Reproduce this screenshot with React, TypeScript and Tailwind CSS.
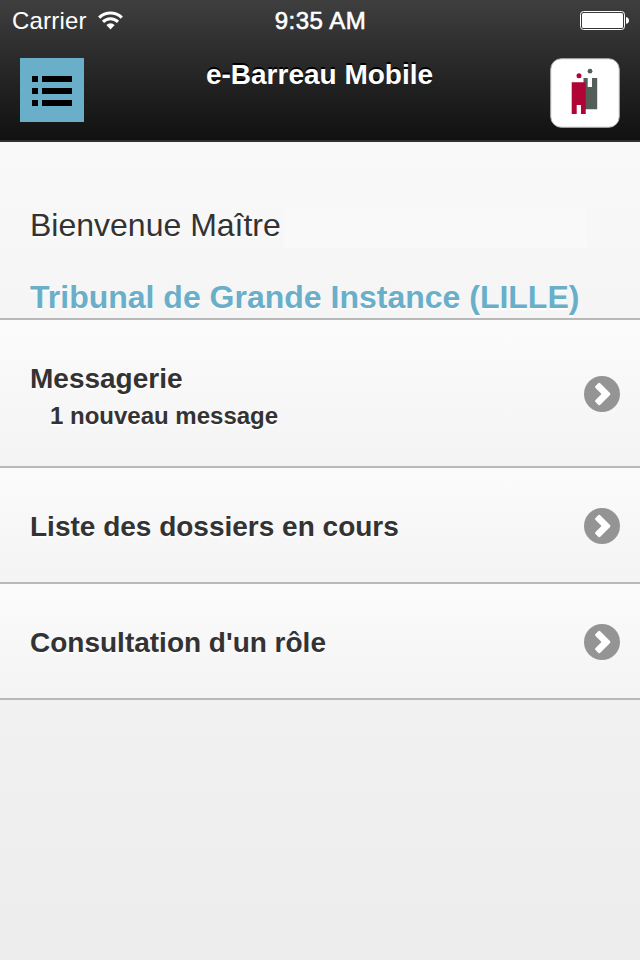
function WifiIcon() {
  return (
    <svg width="26" height="20" viewBox="0 0 26 20" fill="none" stroke="#fff" className="mt-px ml-[10px]">
      <path d="M2.200 6.600A16.200 16.200 0 0 1 24.800 6.600" strokeWidth="3.200" />
      <path d="M6 10.900A10.500 10.500 0 0 1 21 10.900" strokeWidth="3" />
      <path d="M9.300 14.100Q13.500 10.600 17.700 14.100L13.500 18.500z" fill="#fff" stroke="none" />
    </svg>
  );
}

function BatteryIcon() {
  return (
    <svg width="50" height="20" viewBox="0 0 50 20">
      <rect x="1.5" y="1.5" width="44" height="18" rx="3" fill="none" stroke="#fff" strokeWidth="1" />
      <rect x="3" y="3" width="41" height="15" rx="1.500" fill="#fff" />
      <path d="M47 7q3 .6 3 3.400t-3 3.400z" fill="#fff" />
    </svg>
  );
}

function MenuIcon() {
  return (
    <svg width="64" height="64" viewBox="0 0 64 64">
      <path d="M12 18h6v6h-6zM22 18h30v6H22zM12 30h6v6h-6zM22 30h30v6H22zM12 42h6v6h-6zM22 42h30v6H22z" fill="#000" />
    </svg>
  );
}

function Logo() {
  return (
    <svg width="70" height="70" viewBox="0 0 70 70">
      <rect x="0.75" y="0.75" width="68.5" height="68.5" rx="10.5" fill="#fff" stroke="#b5b5b5" strokeWidth="1" />
      <path d="M33.500 20h4.200v9H42v-9h5.200v31.300H33.500z" fill="#525e57" />
      <circle cx="40" cy="13.200" r="2.400" fill="#525e57" />
      <path d="M21.700 24.300h14V56H31v-9h-4.300v9h-5z" fill="#b00336" />
      <circle cx="29" cy="17.700" r="2.500" fill="#b00336" />
    </svg>
  );
}

function Chevron() {
  return (
    <svg width="36" height="36" viewBox="0 0 36 36" className="shrink-0">
      <circle cx="18" cy="18" r="18" fill="#949494" />
      <path d="M11.300 10.200L14.400 7.100q.8-.6 1.600 0l10 10q.8.900 0 1.800L16 28.900q-.8.600-1.600 0L11.300 25.800q-.6-.8 0-1.600l6.200-6.200-6.200-6.200q-.6-.8 0-1.600z" fill="#fff" />
    </svg>
  );
}

function Row({ title, detail }: { title: string; detail?: string }) {
  return (
    <li
      className={`flex items-center justify-between border-b-2 border-[#b8b8b8] bg-linear-to-b from-[#fbfbfb] to-[#f4f4f4] pt-0.5 pr-5 pl-[30px] ${detail ? "h-[148px]" : "h-[116px]"}`}
    >
      <div className={detail ? "pt-1.5" : "pt-0.5"}>
        <h3 className="text-[28px] leading-9 font-bold">{title}</h3>
        {detail && <p className="mt-px pl-5 text-2xl leading-9 font-bold">{detail}</p>}
      </div>
      <Chevron />
    </li>
  );
}

export default function App() {
  return (
    <div className="flex h-[960px] w-[640px] flex-col overflow-hidden bg-[#eee] font-['Liberation_Sans',sans-serif] text-[#333] [text-shadow:0_2px_0_#fff]">
      <header className="h-[142px] shrink-0 border-b-2 border-[#333133] bg-linear-to-b from-[#3f3f3f] to-[#111] text-white">
        <div className="grid h-10 grid-cols-3 items-center pr-[11px] pl-3 text-2xl [text-shadow:none]">
          <div className="flex items-center">
            <span className="pt-0.5 tracking-[0.2px]">Carrier</span>
            <WifiIcon />
          </div>
          <span className="pt-0.5 text-center tracking-[0.5px] [-webkit-text-stroke:0.6px_white]">9:35 AM</span>
          <div className="flex justify-end"><BatteryIcon /></div>
        </div>
        <div className="flex items-start justify-between pt-[18px] pr-5 pl-5">
          <button className="h-16 w-16 bg-[#6aafca]" aria-label="Menu"><MenuIcon /></button>
          <h1 className="-mt-px ml-[5px] text-[28px] leading-9 font-bold [text-shadow:0_-2px_0_#000]">e-Barreau Mobile</h1>
          <Logo />
        </div>
      </header>
      <section className="h-[178px] shrink-0 border-b-2 border-[#b8b8b8] bg-linear-to-b from-[#f9f9f9] to-[#f5f5f5] pt-[65px] pl-[30px] text-[32px] leading-9">
        <div className="flex">
          <p className="w-[254px]">Bienvenue Maître</p>
          <div className="mt-px h-10 w-[303px] bg-[#f9f9f9]" />
        </div>
        <h2 className="-mt-[5px] pt-9 font-bold text-[#6aafca]">Tribunal de Grande Instance (LILLE)</h2>
      </section>
      <ul className="shrink-0">
        <Row title="Messagerie" detail="1 nouveau message" />
        <Row title="Liste des dossiers en cours" />
        <Row title="Consultation d'un rôle" />
      </ul>
      <div className="flex-1 bg-linear-to-b from-[#f1f1f1] to-[#ededed]" />
    </div>
  );
}
